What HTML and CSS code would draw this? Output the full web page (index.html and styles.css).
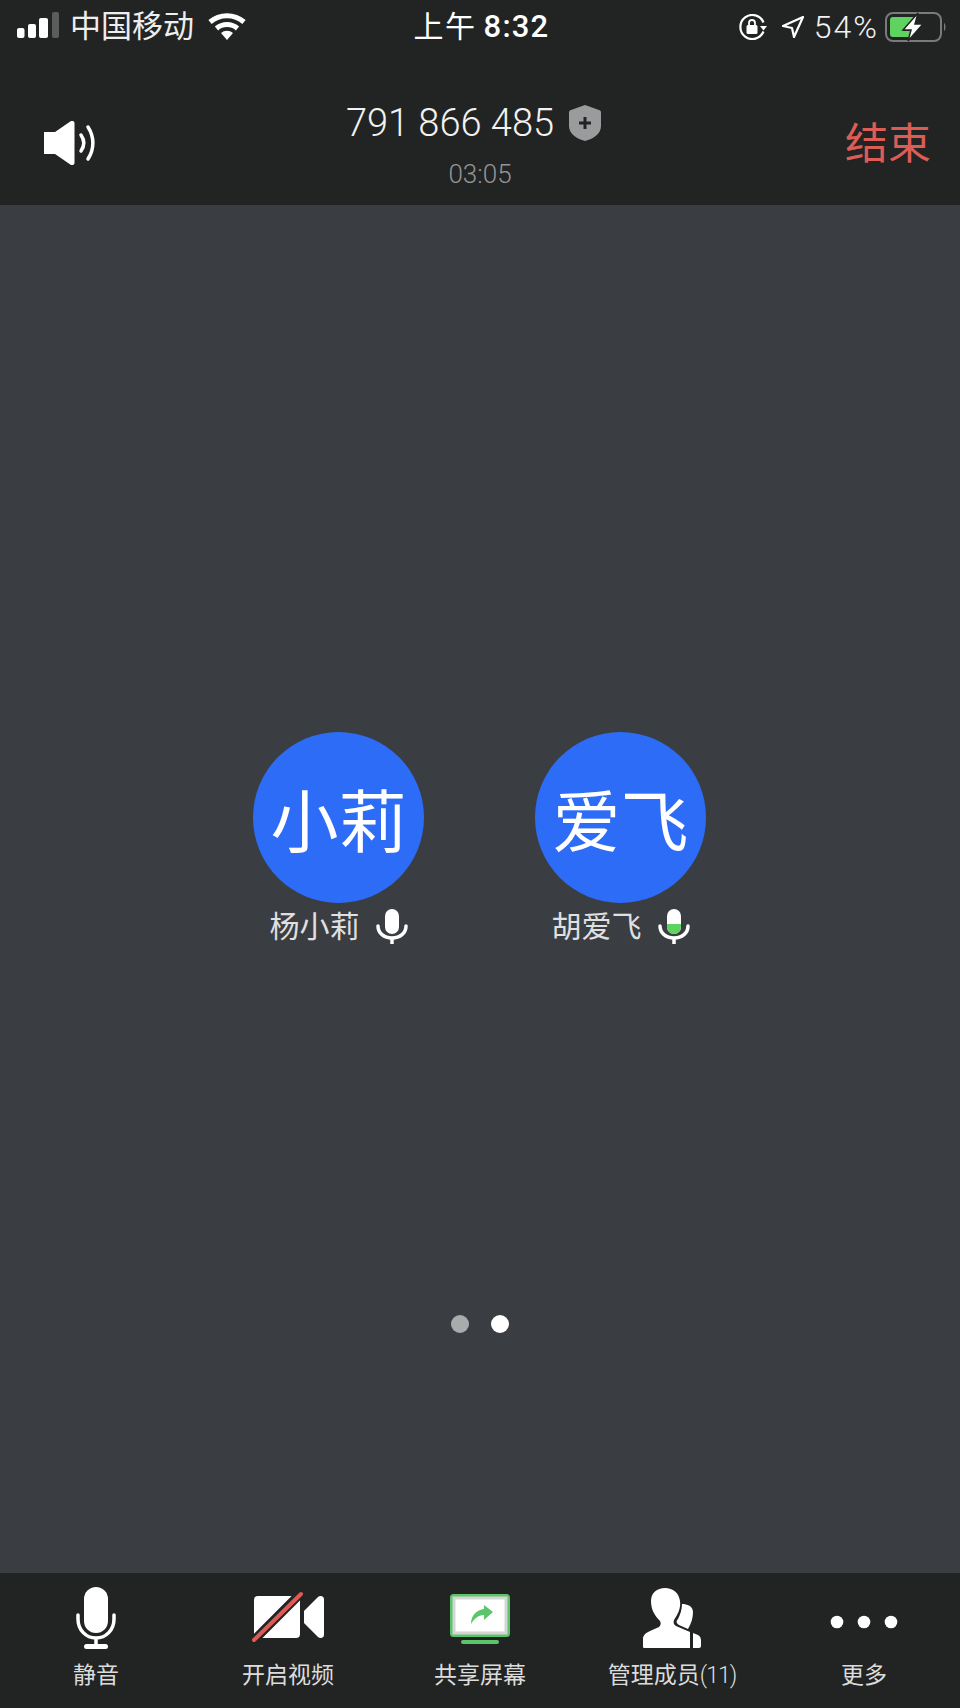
FILE: index.html
```html
<!DOCTYPE html>
<html lang="zh-CN">
<head>
  <meta charset="UTF-8" />
  <title>会议</title>
  <link rel="stylesheet" href="styles.css">
</head>
<body>

<div class="app">

  <div class="status">
    <div class="status-left">
      <svg class="signal" width="43" height="26" viewBox="0 0 43 26">
        <rect x="1" y="16" width="7.500" height="10" rx="2" fill="#fff"/>
        <rect x="12" y="12" width="8" height="14" rx="2" fill="#fff"/>
        <rect x="23" y="6" width="9" height="20" rx="2" fill="#fff"/>
        <rect x="36" y="0" width="7" height="26" rx="2" fill="#5c5c5c"/>
      </svg>
      <span class="carrier">中国移动</span>
      <svg class="wifi" width="38" height="28" viewBox="0 0 38 28">
        <path d="M19 28l-6-7a9 9 0 0 1 12 0z" fill="#fff"/>
        <path d="M2 10a26 26 0 0 1 34 0" fill="none" stroke="#fff" stroke-width="5"/>
        <path d="M8.500 16.500a16 16 0 0 1 21 0" fill="none" stroke="#fff" stroke-width="5"/>
      </svg>
    </div>
    <div class="clock"><span class="ampm">上午</span><span class="time">8:32</span></div>
    <div class="status-right">
      <svg class="rotlock" width="28" height="26" viewBox="0 0 28 26">
        <path d="M24.500 17.500a12 12 0 1 1 0-9" fill="none" stroke="#fff" stroke-width="2.200"/>
        <path d="M21 12h7l-3.500 4.500z" fill="#fff"/>
        <rect x="7.500" y="11" width="11" height="9" rx="1.500" fill="#fff"/>
        <path d="M10 11V9a3 3 0 0 1 6 0v2" fill="none" stroke="#fff" stroke-width="1.800"/>
      </svg>
      <svg class="locate" width="24" height="24" viewBox="0 0 24 24">
        <path d="M22 2L2 11l9 2 2 9z" fill="none" stroke="#fff" stroke-width="2.200" stroke-linejoin="round"/>
      </svg>
      <span class="battery-pct">54%</span>
      <svg width="62" height="30" viewBox="0 0 62 30">
        <rect x="1" y="1" width="55" height="28" rx="7" fill="none" stroke="#7a7a7a" stroke-width="2"/>
        <path d="M5 8a3 3 0 0 1 3-3h21L18 19h7v6H8a3 3 0 0 1-3-3z" fill="#5fd35f"/>
        <path d="M33 1L18 18h8l-3 11 15-17h-8z" fill="#fff" stroke="#222424" stroke-width="1.500"/>
        <path d="M59 11c2 1 2 7 0 8z" fill="#7a7a7a"/>
      </svg>
    </div>
  </div>

  <div class="header">
    <svg class="speaker" width="54" height="44" viewBox="0 0 54 44">
      <path d="M1 11h11L28 0h1.500a2 2 0 0 1 2 2v40a2 2 0 0 1-2 2H28L12 33H1z" fill="#fff"/>
      <path d="M38 14c3.500 5 3.500 11 0 16" fill="none" stroke="#fff" stroke-width="3.500" stroke-linecap="round"/>
      <path d="M45 6c6.500 10 6.500 22 0 32" fill="none" stroke="#fff" stroke-width="3.500" stroke-linecap="round"/>
    </svg>
    <div class="meeting">
      <div class="meeting-id">
        <span>791 866 485</span>
        <svg width="32" height="36" viewBox="0 0 32 36">
          <path d="M16 0l14 5c1 .4 2 1 2 2.500V21c0 8-8 13-16 15C8 34 0 29 0 21V7.500C0 6 1 5.400 2 5z" fill="#9a9b9d"/>
          <path d="M16 12v12M10 18h12" stroke="#222424" stroke-width="3"/>
        </svg>
      </div>
      <div class="timer">03:05</div>
    </div>
    <div class="end">结束</div>
  </div>

  <div class="stage">
    <div class="people">
      <div class="person">
        <div class="avatar">小莉</div>
        <div class="name">
          <span>杨小莉</span>
          <svg width="32" height="36" viewBox="0 0 32 36">
            <rect x="9" y="0" width="14" height="25" rx="7" fill="#fff"/>
            <path d="M2 17c0 7 6 12 14 12s14-5 14-12" fill="none" stroke="#fff" stroke-width="3.500" stroke-linecap="round"/>
            <path d="M16 29v6" stroke="#fff" stroke-width="3.500"/>
          </svg>
        </div>
      </div>
      <div class="person">
        <div class="avatar">爱飞</div>
        <div class="name">
          <span>胡爱飞</span>
          <svg width="32" height="36" viewBox="0 0 32 36">
            <rect x="9" y="0" width="14" height="25" rx="7" fill="#fff"/>
            <path d="M9 15h14v3a7 7 0 0 1-14 0z" fill="#5fd35f"/>
            <path d="M2 17c0 7 6 12 14 12s14-5 14-12" fill="none" stroke="#fff" stroke-width="3.500" stroke-linecap="round"/>
            <path d="M16 29v6" stroke="#fff" stroke-width="3.500"/>
          </svg>
        </div>
      </div>
    </div>
    <div class="dots">
      <span class="dot"></span>
      <span class="dot on"></span>
    </div>
  </div>

  <div class="toolbar">
    <div class="tool">
      <svg width="40" height="62" viewBox="0 0 40 62">
        <rect x="8" y="0" width="24" height="46" rx="12" fill="#fff"/>
        <path d="M2 28v4c0 11 8 19 18 19s18-8 18-19v-4" fill="none" stroke="#fff" stroke-width="3.500" stroke-linecap="round"/>
        <path d="M20 51v7" stroke="#fff" stroke-width="3.500"/>
        <rect x="8" y="57" width="24" height="5" rx="2.500" fill="#fff"/>
      </svg>
      <span>静音</span>
    </div>
    <div class="tool">
      <svg width="72" height="50" viewBox="0 1 72 50">
        <path d="M6 4h38a4 4 0 0 1 4 4v34a4 4 0 0 1-4 4H6a4 4 0 0 1-4-4V8a4 4 0 0 1 4-4z" fill="#fff"/>
        <path d="M52 19L66 5c2-2 6-1 6 2v36c0 3-4 4-6 2L52 31z" fill="#fff"/>
        <path d="M0 50L50 0" stroke="#222424" stroke-width="9"/>
        <path d="M2 48L49 2" stroke="#e05a55" stroke-width="4" stroke-linecap="round"/>
      </svg>
      <span>开启视频</span>
    </div>
    <div class="tool">
      <svg width="60" height="52" viewBox="0 -2 60 52">
        <rect x="1.500" y="1.500" width="57" height="40" rx="2" fill="#fff" stroke="#5cc46b" stroke-width="3"/>
        <rect x="4" y="4" width="52" height="35" fill="none" stroke="#d5d5d5" stroke-width="3"/>
        <path d="M13 48h34" stroke="#5cc46b" stroke-width="4" stroke-linecap="round"/>
        <path d="M21 30c0-9 6-14 13-15v-4l9 7-9 8v-5c-6 0-10 4-13 9z" fill="#5cc46b"/>
      </svg>
      <span>共享屏幕</span>
    </div>
    <div class="tool">
      <svg width="58" height="60" viewBox="0 0 58 60">
        <path d="M1 60C0 60 0 59 0 58V51C0 47 3 45 7 43L16 39C18 37 18 35 17 33C12 28 8 22 8 13C8 5 14 0 22 0C30 0 36 5 37 13C38 20 35 26 31 32C30 35 31 37 33 38L47 44V60Z" fill="#fff"/>
        <path d="M39 16C44 16 50 18 50 24C50 30 48 36 45 41L36 37C33 35 33 33 35 31C37 27 39 22 39 16Z" fill="#fff"/>
        <path d="M50 45L55 47C57 48 58 50 58 53V58C58 59 57 60 56 60H50Z" fill="#fff"/>
      </svg>
      <span>管理成员<span class="count">(11)</span></span>
    </div>
    <div class="tool">
      <svg width="68" height="14" viewBox="0 -4 68 14">
        <circle cx="7" cy="7" r="6.300" fill="#fff"/>
        <circle cx="34" cy="7" r="6.300" fill="#fff"/>
        <circle cx="61" cy="7" r="6.300" fill="#fff"/>
      </svg>
      <span>更多</span>
    </div>
  </div>

</div>

</body>
</html>
```

FILE: styles.css
```css
* {
  box-sizing: border-box;
}
html, body {
  margin: 0;
  padding: 0;
  height: 100%;
  overflow: hidden;
  font-family: 'Roboto', 'Noto Sans CJK SC', sans-serif;
  color: #fff;
}

.app {
  height: 1708px;
  display: flex;
  flex-direction: column;
  background: #3a3d42;
}

/* status bar */
.status {
  height: 55px;
  padding: 11px 13px 0 16px;
  background: #222424;
  display: grid;
  grid-template-columns: 1fr auto 1fr;
  align-items: start;
}
.status-left {
  display: flex;
  align-items: center;
  gap: 11px;
}
.signal {
  margin-top: -4px;
}
.carrier {
  font-size: 31px;
  line-height: 32px;
  color: #eee;
}
.wifi {
  margin-left: 3px;
  margin-top: -3px;
}
.clock {
  display: flex;
  align-items: center;
  font-size: 30px;
  line-height: 32px;
  letter-spacing: 1.5px;
}
.ampm {
  margin-right: 7px;
}
.time {
  font-size: 31px;
  font-weight: 500;
  letter-spacing: 1.2px;
}
.status-right {
  display: flex;
  align-items: center;
  justify-content: flex-end;
  height: 32px;
}
.rotlock {
  margin-right: 14px;
}
.locate {
  margin-right: 9px;
}
.battery-pct {
  font-size: 32px;
  font-weight: 300;
  letter-spacing: 2px;
  color: #f2f2f2;
  margin-right: 6px;
}

/* meeting header */
.header {
  height: 150px;
  background: #222424;
  padding: 26px 29px 0 43px;
  position: relative;
  display: flex;
  align-items: center;
  justify-content: space-between;
}
.meeting {
  position: absolute;
  left: 0;
  right: 0;
  top: 48px;
  display: flex;
  flex-direction: column;
  align-items: center;
}
.meeting-id {
  display: flex;
  align-items: center;
  gap: 15px;
  margin-right: 13px;
  font-size: 38px;
  font-weight: 300;
  line-height: 40px;
  color: #f2f2f2;
}
.timer {
  margin-top: 17px;
  font-size: 26px;
  font-weight: 300;
  line-height: 28px;
  color: #939496;
}
.end {
  margin-top: -6px;
  font-size: 43px;
  color: #dd5c56;
}

/* gallery */
.stage {
  flex: 1;
  display: flex;
  flex-direction: column;
  align-items: center;
}
.people {
  margin-top: 527px;
  display: flex;
  gap: 111px;
  margin-left: -1px;
}
.person {
  width: 171px;
  display: flex;
  flex-direction: column;
  align-items: center;
}
.avatar {
  width: 171px;
  height: 171px;
  border-radius: 50%;
  background: #2d6cf6;
  display: flex;
  align-items: center;
  justify-content: center;
  font-size: 68px;
  color: #fff;
}
.name {
  margin-top: 6px;
  display: flex;
  align-items: center;
  gap: 16px;
  font-size: 30px;
  line-height: 36px;
  color: #e0e0e0;
  white-space: nowrap;
}
.dots {
  margin-top: 370px;
  display: flex;
  gap: 22px;
}
.dot {
  width: 18px;
  height: 18px;
  border-radius: 50%;
  background: #aaabad;
}
.dot.on {
  background: #fff;
}

/* toolbar */
.toolbar {
  height: 135px;
  padding-top: 14px;
  background: #222424;
  display: grid;
  grid-template-columns: repeat(5, 192px);
}
.tool {
  display: flex;
  flex-direction: column;
  align-items: center;
  font-size: 23px;
  color: #dcdcdc;
}
.tool svg {
  height: 62px;
  margin-bottom: 11px;
}
.tool span {
  line-height: 32px;
  white-space: nowrap;
}
.tool .count {
  font-weight: 300;
  letter-spacing: -1px;
}
```
